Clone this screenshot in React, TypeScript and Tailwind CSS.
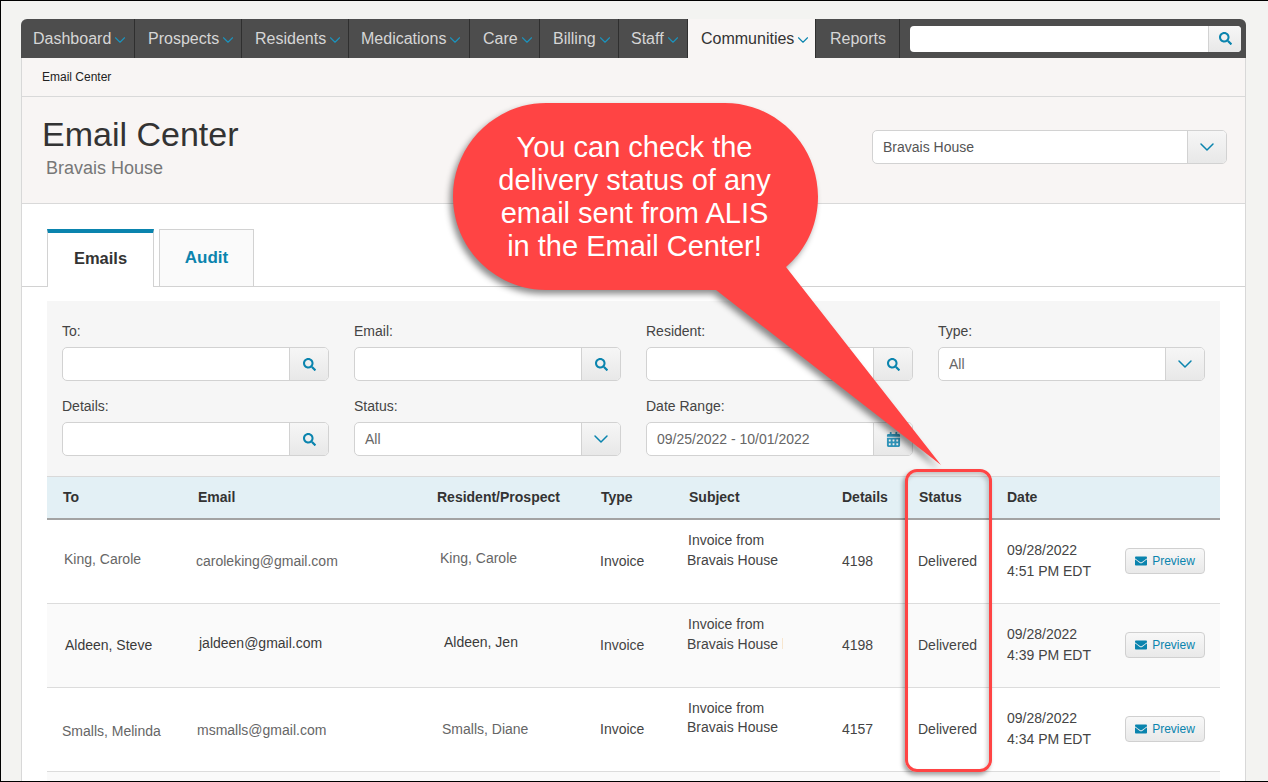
import { ChevronDown } from "lucide-react";
import { FaSearch, FaCalendarAlt, FaEnvelope } from "react-icons/fa";

const navItems = [
  { label: "Dashboard", w: "w-[114px] pl-[12px]" },
  { label: "Prospects", w: "w-[107px] pl-[13px]" },
  { label: "Residents", w: "w-[107px] pl-[13px]" },
  { label: "Medications", w: "w-[121px] pl-[12px]" },
  { label: "Care", w: "w-[70px] pl-[13px]" },
  { label: "Billing", w: "w-[79px] pl-[13px]" },
  { label: "Staff", w: "w-[69px] pl-[12px]" },
];

function Label({ children }: { children: string }) {
  return <div className="h-[20px] text-[14px] leading-[20px] text-[#444]">{children}</div>;
}

function SearchField({ label }: { label: string }) {
  return (
    <div>
      <Label>{label}</Label>
      <div className="mt-[6px] flex h-[34px] rounded-[5px] border border-[#d2d2d2] bg-white">
        <div className="flex-1" />
        <div className="flex w-[39px] items-center justify-center rounded-r-[4px] border-l border-[#d2d2d2] bg-gradient-to-b from-[#f6f6f6] to-[#e8e8e8]">
          <FaSearch className="text-[13px] text-[#0a84ae]" />
        </div>
      </div>
    </div>
  );
}

function SelectField({ label, value }: { label: string; value: string }) {
  return (
    <div>
      <Label>{label}</Label>
      <div className="mt-[6px] flex h-[34px] rounded-[5px] border border-[#d2d2d2] bg-white">
        <div className="flex flex-1 items-center pl-[10px] text-[14px] text-[#666]">{value}</div>
        <div className="flex w-[39px] items-center justify-center rounded-r-[4px] border-l border-[#d2d2d2] bg-gradient-to-b from-[#f6f6f6] to-[#e8e8e8]">
          <ChevronDown size={24} strokeWidth={1.5} className="text-[#0a84ae]" />
        </div>
      </div>
    </div>
  );
}

function Preview() {
  return (
    <div className="flex h-[26px] w-[80px] items-center justify-center gap-[5px] rounded-[4px] border border-[#d0d0d0] bg-gradient-to-b from-[#f8f8f8] to-[#e9e9e9] text-[12px] text-[#0a84ae]">
      <FaEnvelope className="text-[12px]" />
      <span>Preview</span>
    </div>
  );
}

const grid = "grid grid-cols-[143px_240px_162px_88px_155px_75px_90px_115px_105px]";

function Row({
  alt,
  mark,
  to,
  email,
  resident,
  details,
  time,
  toClass,
  emailClass,
  residentClass,
  subjectClass,
  textClass,
}: {
  alt?: boolean;
  mark?: boolean;
  to: string;
  email: string;
  resident: string;
  details: string;
  time: string;
  toClass: string;
  emailClass: string;
  residentClass: string;
  subjectClass: string;
  textClass: string;
}) {
  return (
    <div className={`${grid} h-[84px] items-center border-b border-[#dcdcdc] text-[14px] text-[#444] ${alt ? "bg-[#fafafa]" : "bg-white"}`}>
      <div className={`${toClass} ${textClass}`}>{to}</div>
      <div className={`${emailClass} ${textClass}`}>{email}</div>
      <div className={`${residentClass} ${textClass}`}>{resident}</div>
      <div className="pl-[8px]">Invoice</div>
      <div className={subjectClass}>
        <div className="pl-[8px]">Invoice from</div>
        <div className="flex items-center pl-[7px]">
          Bravais House
          {mark && <span className="ml-[4px] h-[11px] w-[1px] bg-[#f7e6cf]" />}
        </div>
      </div>
      <div className="pl-[7px]">{details}</div>
      <div className="pl-[8px]">Delivered</div>
      <div className="pb-[2px] pl-[7px] leading-[21px]">
        <div>09/28/2022</div>
        <div>{time}</div>
      </div>
      <div className="pb-[2px] pl-[10px]">
        <Preview />
      </div>
    </div>
  );
}

export default function App() {
  return (
    <div className="relative h-[782px] w-[1268px] overflow-hidden border-y border-l border-black bg-[#f3f3f1] font-['Liberation_Sans',Arial,sans-serif]">
      <div className="ml-[20px] mt-[18px] h-[800px] w-[1225px] rounded-t-[6px] border-x border-[#d8d8d8] bg-white">
        {/* nav */}
        <div className="-mx-[1px] flex h-[39px] rounded-t-[6px] bg-[#4d4d4d] text-[16px]">
          {navItems.map((n) => (
            <div key={n.label} className={`${n.w} flex items-center border-r border-[#2f2f2f] text-[#d6d6d6]`}>
              <span>{n.label}</span>
              <ChevronDown size={18} strokeWidth={1.5} className="mt-[2px] shrink-0 text-[#1c93bd]" />
            </div>
          ))}
          <div className="flex w-[127px] items-center bg-[#f8f5f4] pl-[13px] text-[#333]">
            <span>Communities</span>
            <ChevronDown size={18} strokeWidth={1.5} className="mt-[2px] shrink-0 text-[#0a84ae]" />
          </div>
          <div className="flex w-[85px] items-center border-x border-[#2f2f2f] pl-[14px] text-[#d6d6d6]">Reports</div>
          <div className="flex flex-1 items-center pl-[10px] pr-[5px]">
            <div className="flex h-[26px] flex-1 rounded-[4px] bg-white">
              <div className="flex-1" />
              <div className="flex w-[33px] items-center justify-center rounded-r-[4px] border-l border-[#d2d2d2] bg-gradient-to-b from-[#f6f6f6] to-[#e8e8e8]">
                <FaSearch className="text-[13px] text-[#0a84ae]" />
              </div>
            </div>
          </div>
        </div>
        {/* breadcrumb */}
        <div className="flex h-[39px] items-center border-b border-[#d9d9d9] bg-[#f8f5f4] pl-[20px] text-[12px] text-[#222]">
          Email Center
        </div>
        {/* header */}
        <div className="flex h-[107px] items-start justify-between border-b border-[#d9d9d9] bg-[#f8f5f4] pl-[20px] pr-[18px]">
          <div>
            <div className="mt-[17px] text-[34px] leading-[40px] text-[#333]">Email Center</div>
            <div className="ml-[4px] mt-[2px] text-[18px] leading-[24px] text-[#777]">Bravais House</div>
          </div>
          <div className="mt-[33px] flex h-[34px] w-[355px] rounded-[5px] border border-[#d2d2d2] bg-white">
            <div className="flex flex-1 items-center pl-[10px] text-[14px] text-[#555]">Bravais House</div>
            <div className="flex w-[39px] items-center justify-center rounded-r-[4px] border-l border-[#d2d2d2] bg-gradient-to-b from-[#f6f6f6] to-[#e8e8e8]">
              <ChevronDown size={24} strokeWidth={1.5} className="text-[#0a84ae]" />
            </div>
          </div>
        </div>
        {/* tabs */}
        <div className="mt-[25px] flex h-[58px] gap-[5px] border-b border-[#d2d2d2] pl-[25px]">
          <div className="relative flex h-[58px] w-[107px] items-center justify-center border-x border-t-[4px] border-x-[#d2d2d2] border-t-[#0a84ae] bg-white pb-[3px] text-[16.500px] font-bold text-[#333]">
            Emails
          </div>
          <div className="flex h-[57px] w-[95px] items-center justify-center border-x border-t border-[#d2d2d2] bg-[#fafafa] text-[17px] font-bold text-[#0a84ae]">
            Audit
          </div>
        </div>
        {/* filters */}
        <div className="mx-[25px] mt-[14px] h-[175px] bg-[#f6f6f6] px-[15px] pt-[20px]">
          <div className="grid w-[1143px] grid-cols-[267px_267px_267px_267px] gap-x-[25px] gap-y-[15px]">
            <SearchField label="To:" />
            <SearchField label="Email:" />
            <SearchField label="Resident:" />
            <SelectField label="Type:" value="All" />
            <SearchField label="Details:" />
            <SelectField label="Status:" value="All" />
            <div>
              <Label>Date Range:</Label>
              <div className="mt-[6px] flex h-[34px] rounded-[5px] border border-[#d2d2d2] bg-white">
                <div className="flex flex-1 items-center pl-[10px] text-[14px] text-[#666]">09/25/2022 - 10/01/2022</div>
                <div className="flex w-[39px] items-center justify-center rounded-r-[4px] border-l border-[#d2d2d2] bg-gradient-to-b from-[#f6f6f6] to-[#e8e8e8]">
                  <FaCalendarAlt className="text-[15px] text-[#2f93b8]" />
                </div>
              </div>
            </div>
          </div>
        </div>
        {/* table */}
        <div className="mx-[25px]">
          <div className={`${grid} h-[44px] items-center border-y border-t-[#d9d9d9] border-b-[2px] border-b-[#a3a3a3] bg-[#e3f0f5] text-[14px] font-bold text-[#333]`}>
            <div className="pl-[16px]">To</div>
            <div className="pl-[8px]">Email</div>
            <div className="pl-[7px]">Resident/Prospect</div>
            <div className="pl-[9px]">Type</div>
            <div className="pl-[9px]">Subject</div>
            <div className="pl-[7px]">Details</div>
            <div className="pl-[9px]">Status</div>
            <div className="pl-[7px]">Date</div>
            <div />
          </div>
          <Row
            to="King, Carole"
            email="caroleking@gmail.com"
            resident="King, Carole"
            details="4198"
            time="4:51 PM EDT"
            toClass="pb-[4px] pl-[17px]"
            emailClass="pl-[6px]"
            residentClass="pb-[6px] pl-[10px]"
            subjectClass="pb-[24px] leading-[20px]"
            textClass="text-[#666]"
          />
          <Row
            alt
            mark
            to="Aldeen, Steve"
            email="jaldeen@gmail.com"
            resident="Aldeen, Jen"
            details="4198"
            time="4:39 PM EDT"
            toClass="pl-[18px]"
            emailClass="pb-[4px] pl-[9px]"
            residentClass="pb-[6px] pl-[14px]"
            subjectClass="pb-[24px] leading-[20px]"
            textClass="text-[#3a3a3a]"
          />
          <Row
            to="Smalls, Melinda"
            email="msmalls@gmail.com"
            resident="Smalls, Diane"
            details="4157"
            time="4:34 PM EDT"
            toClass="pt-[4px] pl-[15px]"
            emailClass="pt-[2px] pl-[7px]"
            residentClass="pl-[12px]"
            subjectClass="pb-[23px] leading-[19px]"
            textClass="text-[#666]"
          />
          <div className="h-[20px] bg-[#fafafa]" />
        </div>
      </div>

      {/* callout drawing */}
      <svg
        className="absolute left-[0px] top-[0px] drop-shadow-[-3px_4px_3px_rgba(0,0,0,0.45)]"
        width="1267"
        height="780"
        viewBox="1 1 1267 780"
      >
        <path
          d="M546 103 H725 C776 103 818 145 818 196.500 C818 225 806 250 786 267 L941 465 L716 290 H546 C495 290 453 248 453 196.500 C453 145 495 103 546 103 Z"
          fill="#ff4444"
        />
      </svg>
      <div className="absolute left-[451px] top-[130px] w-[365px] text-center text-[29px] leading-[33px] text-white">
        You can check the
        <br />
        delivery status of any
        <br />
        email sent from ALIS
        <br />
        in the Email Center!
      </div>
      {/* highlight box */}
      <div className="absolute left-[904px] top-[468px] h-[303px] w-[87px] rounded-[12px] border-[3px] border-[#ff4444] shadow-[-2px_3px_4px_rgba(0,0,0,0.35),inset_-2px_3px_4px_rgba(0,0,0,0.2)]" />
    </div>
  );
}
